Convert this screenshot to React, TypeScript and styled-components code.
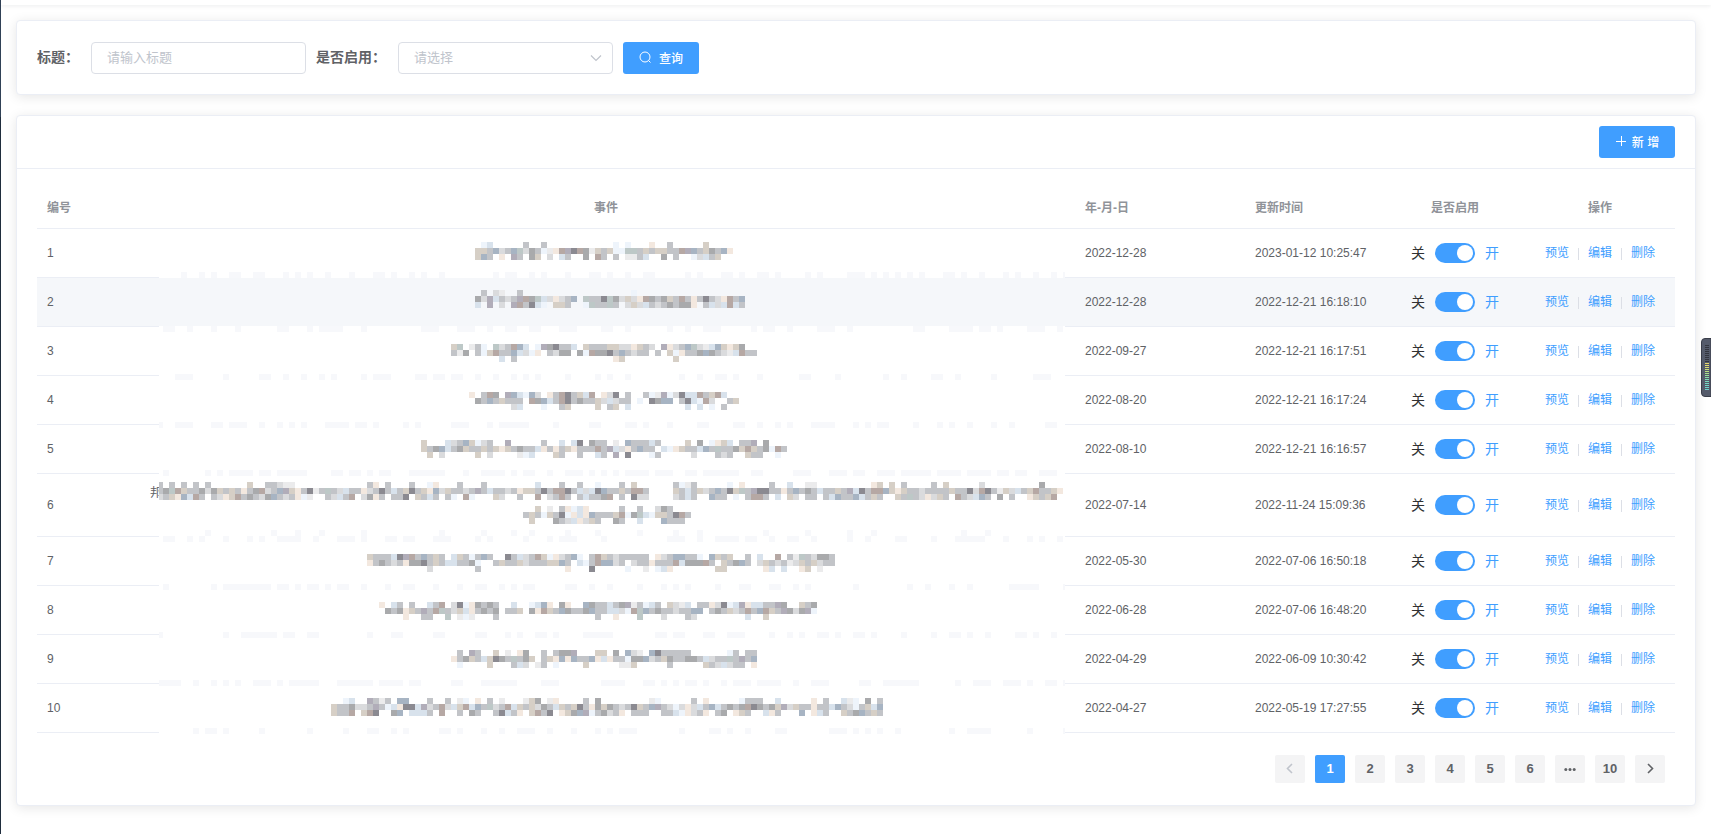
import React, { useState } from "react";
import styled, { createGlobalStyle, css } from "styled-components";

const blue = "#409eff";
const line = "#ebeef5";

const GlobalStyle = createGlobalStyle`
  * { box-sizing: border-box; }
  body {
    margin: 0;
    background: #fff;
    color: #303133;
    font-family: "Liberation Sans", "Noto Sans CJK SC", sans-serif;
    font-size: 14px;
  }
  button, input, select { font-family: inherit; }
`;

const Shell = styled.div`
  display: flex;
  min-height: 100vh;
`;

const SidebarEdge = styled.aside`
  flex: 0 0 1px;
  background: linear-gradient(#304156 0 117px, #1f2d3d 117px);
`;

const Content = styled.div`
  flex: 1;
  min-width: 0;
`;

const TopBar = styled.header`
  height: 5px;
  background: #fff;
  box-shadow: 0 1px 4px rgba(0, 21, 41, 0.08);
`;

const Main = styled.main`
  display: flex;
  flex-direction: column;
  gap: 20px;
  padding: 15px;
`;

const Card = styled.section`
  background: #fff;
  border: 1px solid ${line};
  border-radius: 4px;
  box-shadow: 0 2px 12px rgba(0, 0, 0, 0.1);
`;

const SearchForm = styled.form`
  display: flex;
  align-items: center;
  gap: 10px;
  padding: 21px 20px 20px;
`;

const Field = styled.div`
  display: flex;
  align-items: center;
`;

const FieldLabel = styled.label`
  padding: 0 12px 2px 0;
  color: #606266;
  font-weight: 700;
  line-height: 30px;
`;

const controlStyle = css`
  width: 215px;
  height: 32px;
  padding: 0 15px 2px;
  border: 1px solid #dcdfe6;
  border-radius: 4px;
  background: #fff;
  font-size: 13px;
  outline: none;
`;

const TextInput = styled.input`
  ${controlStyle}
  color: #606266;
  &::placeholder { color: #c0c4cc; }
`;

const SelectWrap = styled.div`
  position: relative;
  display: flex;
`;

const SelectBox = styled.select`
  ${controlStyle}
  appearance: none;
  color: #c0c4cc;
`;

const SelectArrow = styled.svg`
  position: absolute;
  right: 11px;
  top: 10px;
  pointer-events: none;
`;

const PrimaryButton = styled.button<{ $gap: number }>`
  display: flex;
  align-items: center;
  justify-content: center;
  gap: ${(p) => p.$gap}px;
  width: 76px;
  height: 32px;
  padding: 0 0 2px;
  border: 0;
  border-radius: 3px;
  background: ${blue};
  color: #fff;
  font-size: 12px;
  font-weight: 500;
  cursor: pointer;
`;

const CardHeader = styled.div`
  display: flex;
  justify-content: flex-end;
  padding: 10px 20px;
  border-bottom: 1px solid ${line};
`;

const CardBody = styled.div`
  padding: 20px;
`;

const TableWrap = styled.div`
  position: relative;
`;

const Table = styled.table`
  width: 100%;
  table-layout: fixed;
  border-collapse: separate;
  border-spacing: 0;
  color: #606266;
  font-size: 12px;
  line-height: 23px;
`;

const Col = styled.col<{ $width?: number }>`
  ${(p) => p.$width && `width: ${p.$width}px;`}
`;

const HeadCell = styled.th<{ $center?: boolean }>`
  padding: 8px 10px;
  border-bottom: 1px solid ${line};
  color: #909399;
  font-weight: 700;
  text-align: ${(p) => (p.$center ? "center" : "left")};
`;

const Row = styled.tr<{ $active: boolean; $tall: boolean }>`
  height: ${(p) => (p.$tall ? 63 : 49)}px;
  background: ${(p) => (p.$active ? "#f5f7fa" : "transparent")};
`;

const Cell = styled.td`
  padding: 8px 10px;
  border-bottom: 1px solid ${line};
`;

const LeadText = styled.div`
  min-height: 46px;
  padding-left: 3px;
`;

const Mosaic = styled.svg`
  position: absolute;
  left: 122px;
  top: 47px;
  pointer-events: none;
`;

const SwitchLabel = styled.label`
  display: flex;
  align-items: center;
  justify-content: center;
  gap: 10px;
  line-height: 20px;
`;

const SwitchText = styled.span<{ $on: boolean }>`
  color: ${(p) => (p.$on ? blue : "#303133")};
  font-size: 14px;
`;

const SwitchInput = styled.input`
  appearance: none;
  display: flex;
  align-items: center;
  width: 40px;
  height: 20px;
  margin: 0;
  padding: 0 2px;
  border-radius: 10px;
  background: #dcdfe6;
  cursor: pointer;
  &::before {
    content: "";
    width: 16px;
    height: 16px;
    border-radius: 50%;
    background: #fff;
  }
  &:checked {
    justify-content: flex-end;
    background: ${blue};
  }
`;

const Actions = styled.div`
  display: flex;
  align-items: center;
  justify-content: center;
`;

const ActionLink = styled.a`
  color: ${blue};
  text-decoration: none;
`;

const Divider = styled.span`
  width: 1px;
  height: 12px;
  margin: 2px 9px 0;
  background: #dcdfe6;
`;

const Pagination = styled.nav`
  display: flex;
  justify-content: flex-end;
  gap: 10px;
  padding: 22px 10px 2px;
`;

const PageButton = styled.button<{ $active?: boolean }>`
  display: flex;
  align-items: center;
  justify-content: center;
  width: 30px;
  height: 28px;
  padding: 0 0 2px;
  border: 0;
  border-radius: 2px;
  background: ${(p) => (p.$active ? blue : "#f4f4f5")};
  color: ${(p) => (p.$active ? "#fff" : "#606266")};
  font-size: 13px;
  font-weight: 700;
  cursor: pointer;
  &:disabled { color: #c0c4cc; }
`;

const Meter = styled.div`
  position: fixed;
  right: 0;
  top: 338px;
`;

const CELL = 6;

const palette: Record<string, string> = {
  a: "#a9aaac",
  b: "#c2c4c8",
  c: "#dadbdd",
  d: "#8b8a91",
  e: "#d6cfc6",
  f: "#b6a8a4",
  g: "#a7b4c3",
  h: "#d8e2ec",
  i: "#f3e8df",
  j: "#eef4fb",
  k: "#ebebec",
  l: "#b1adb9",
  m: "#bdc8c7",
};

/* Each block: first column, first row, width in cells, then one string for every line of cells. */
const blocks: { x: number; y: number; w: number; lines: string[] }[] = [
  {
    x: 52, y: 1, w: 43,
    lines: [
      ".jh.....b..b...........j.j...i..b.....e",
      "eebgcbgmcabjkifldfakebejjmmbebeebbflgbeabgi",
      "egb.i.lb.ae.c.hb..a.fb.b.kkbh..a.b..jchbe",
    ],
  },
  {
    x: 52, y: 9, w: 45,
    lines: [
      ".b.ck..b..................j",
      "aclhbcblfamhcicbg.mbbdmacecifabaebfbibdbcifbg",
      "h.l.c.lfbdhj.eeb..jmbbmb.cechbcbabaai.bhchfhb",
    ],
  },
  {
    x: 48, y: 18, w: 51,
    lines: [
      "em.kbj.mcbfgh.jladbbh.ebbbeecciebc.licbgmckhgeiea",
      "bka.bjefbbghcji.bcaa.ajfaadbgbcbb.b.ejibbagabckhfbbe",
      "........h.b................ie........e",
    ],
  },
  {
    x: 51, y: 26, w: 45,
    lines: [
      "i.bfa.lghjgc.ibfdbehf.icd.b..bjkljcdhhfbefh",
      ".abgbebbb.faghbfdbabbechcbb.j.dagg.bdhjfc..bef",
      ".......ch...j..be....e.be.h.........h.h.j.b",
    ],
  },
  {
    x: 43, y: 34, w: 61,
    lines: [
      "e...hcbgejcb..l.....b..h.hd.abb.k.gbbbhb....e.a.jieh.bbl.a",
      "ebaghbaebbebeiebabbhibibeibbbfblhcibgbb.hjiebbhgbmbbaefebajfbcb",
      ".e.c.....e.c....kjh...eb..b..hb.l.d...jb.....c...bcb..ebb..j..e",
    ],
  },
  {
    x: -1, y: 41, w: 151,
    lines: [
      "b.b.b.b.b......e..bbckk............bi.b...b..ji...b...b........h...b..b..j...b.e......bjkb.....j.i....b..h..kk.........ie.e.b....b.e.....c.........a",
      "bamfebbacaebebibafcbgleibdkbmbchbbicbdbhbedbeigcebbcblbhbbcbieebdbffdbhchdgbbebffb....ebhbecbgbdemblddbbibgbabhbbeblhdbffgeiebbcbbbbebbdcfdbkechbefbbeiebbh",
      "cbeighfb.bciefbabcagbcbijk..bchbf.caib.bbd.ebhb.bj.fj...ec..b..f.cbfb.bhbbaf.b.dcc....cbhb..gbb.j.bffb.h.ec.bb.bhgbbghbeb..ebmbciceb.fbchgb.a.b..iebef",
    ],
  },
  {
    x: 60, y: 45, w: 28,
    lines: [
      "..e.k.bijhi.....b..b..cab.",
      "bebjebdjihigbbbefjamhjeebdfbek",
      ".e...abchiceb..ab..h...gbbb",
    ],
  },
  {
    x: 34, y: 53, w: 78,
    lines: [
      "ebbbhdlfbgbeb.hebjbgb..dbhcbfejicbgj.bfebcbbbbb.icbggbbj.gebe..b.h..f.bkmbcaab",
      "ibabcbiaadbebhhbbaj..bebbecbbbeegb.hjbfggcb.cbbibbbfhaaafb.ebagb.cebcbkcebecbb",
      "..........c.......b..............i...d.....j..k.jhi.......ee......ih.h..ie.k",
    ],
  },
  {
    x: 36, y: 61, w: 73,
    lines: [
      "i.hb.b..hbf.cdjiabab..h..jhgi.ai..gabbhbalkbjhb.eckh.bbicdjhlihhbbla..ebai",
      ".abaieblbfmbcehibaba.bbe.aifebgabbagbbhhcjfmgbabbcbbgg.babecbfbgfeblacalj",
      "....i..bb..m.kjk...b................b..i...m...c...bc........h..e.........h",
    ],
  },
  {
    x: 48, y: 69, w: 51,
    lines: [
      ".b.lb..e.k.ia..b.baal...ee.a.gck.gdbbbbb......jb.bb",
      "ibaebhedabmbae.beigigbbgihibbjaagcbeabbaabhcbbmblbgdgj",
      ".j....e...bhc.kb.j....e.....kke.....b.....ebchcbb.ik",
    ],
  },
  {
    x: 28, y: 77, w: 92,
    lines: [
      "..jh..lbkb.gg...b..b.kj.i.b.k...kea.ki....b.a........kj.....b.i.....jbbb..h.....i.b..hkj.a.bgfi",
      "ebbaccblbjhiddhlcbfchefhgbmcbfhebecabhebedbiaeabcbdebglbcjcichbghbabafdabaelcebbibbhgbcjbehgbdbmcbcechebg",
      "ebbf.efd..ag.hhhb.f..b.ab..bdhbi.efbd.ieagljbacbi.bbb..bbhjicbi.ba.ieb..hib...g.ihb..ebagbebfaebb",
    ],
  },
];

/* Faint rows of cells that cover the separators: row index and fill rate. */
const seams: [number, number][] = [
  [6, 35], [15, 35], [23, 35], [31, 40], [39, 62],
  [49, 10], [50, 32], [58, 35], [66, 42], [74, 50], [82, 38],
];

const speckle = (x: number, y: number) => {
  let h = (x * 374761393 + y * 668265263) | 0;
  h = Math.imul(h ^ (h >>> 13), 1274126177);
  return ((h ^ (h >>> 16)) >>> 0) % 100;
};

function EventMosaic() {
  return (
    <Mosaic width="906" height="498" shapeRendering="crispEdges" aria-hidden="true">
      <rect x="0" y={41 * CELL} width="4" height="18" fill="#fff" />
      {seams.map(([y, rate]) => (
        <g key={y}>
          <rect x="0" y={y * CELL} width="906" height={CELL} fill="#fff" />
          {Array.from({ length: 152 }, (_, i) =>
            speckle(i, y) < rate ? (
              <rect key={i} x={4 + (i - 1) * CELL} y={y * CELL} width={CELL} height={CELL} fill="#f7f8fb" />
            ) : null
          )}
        </g>
      ))}
      {blocks.map((b, n) =>
        b.lines.map((text, r) =>
          [...text.slice(0, b.w)].map((c, i) =>
            palette[c] ? (
              <rect
                key={`${n}-${r}-${i}`}
                x={4 + (b.x + i) * CELL}
                y={(b.y + r) * CELL}
                width={CELL}
                height={CELL}
                fill={palette[c]}
              />
            ) : null
          )
        )
      )}
    </Mosaic>
  );
}

const records = [
  { id: 1, date: "2022-12-28", updated: "2023-01-12 10:25:47" },
  { id: 2, date: "2022-12-28", updated: "2022-12-21 16:18:10" },
  { id: 3, date: "2022-09-27", updated: "2022-12-21 16:17:51" },
  { id: 4, date: "2022-08-20", updated: "2022-12-21 16:17:24" },
  { id: 5, date: "2022-08-10", updated: "2022-12-21 16:16:57" },
  { id: 6, date: "2022-07-14", updated: "2022-11-24 15:09:36", lead: "邦" },
  { id: 7, date: "2022-05-30", updated: "2022-07-06 16:50:18" },
  { id: 8, date: "2022-06-28", updated: "2022-07-06 16:48:20" },
  { id: 9, date: "2022-04-29", updated: "2022-06-09 10:30:42" },
  { id: 10, date: "2022-04-27", updated: "2022-05-19 17:27:55" },
];

function EnableSwitch({ id }: { id: number }) {
  const [on, setOn] = useState(true);
  return (
    <SwitchLabel htmlFor={`enabled-${id}`}>
      <SwitchText $on={!on}>关</SwitchText>
      <SwitchInput
        id={`enabled-${id}`}
        type="checkbox"
        role="switch"
        checked={on}
        onChange={(e) => setOn(e.target.checked)}
      />
      <SwitchText $on={on}>开</SwitchText>
    </SwitchLabel>
  );
}

function Chevron({ flip }: { flip?: boolean }) {
  return (
    <svg width="12" height="12" viewBox="0 0 12 12" fill="none" stroke="currentColor" strokeWidth="1.6">
      <path d={flip ? "M4 2l4.5 4.5L4 11" : "M8 2L3.500 6.500l4.500 4.500"} />
    </svg>
  );
}

const meterColors = [
  "#33363f", "#33363f", "#33363f", "#33363f", "#33363f", "#33363f", "#33363f", "#33363f", "#33363f",
  "#e8d86a", "#e4da6c", "#d8dc70", "#c8de78", "#b8e080", "#a8e08c", "#98e098", "#88dea8",
  "#80dcb4", "#78dabc", "#74d8c4", "#70d6c8", "#6cd4cc", "#6cd4cc",
];

export default function App() {
  const [title, setTitle] = useState("");
  const [enabled, setEnabled] = useState("");
  const [page, setPage] = useState("1");

  return (
    <Shell>
      <GlobalStyle />
      <SidebarEdge />
      <Content>
        <TopBar />
        <Main>
          <Card>
            <SearchForm onSubmit={(e) => e.preventDefault()}>
              <Field>
                <FieldLabel htmlFor="title">标题：</FieldLabel>
                <TextInput
                  id="title"
                  placeholder="请输入标题"
                  value={title}
                  onChange={(e) => setTitle(e.target.value)}
                />
              </Field>
              <Field>
                <FieldLabel htmlFor="enabled">是否启用：</FieldLabel>
                <SelectWrap>
                  <SelectBox id="enabled" value={enabled} onChange={(e) => setEnabled(e.target.value)}>
                    <option value="">请选择</option>
                    <option value="1">开</option>
                    <option value="0">关</option>
                  </SelectBox>
                  <SelectArrow width="12" height="12" viewBox="0 0 12 12" fill="none" stroke="#c0c4cc" strokeWidth="1.2">
                    <path d="M1 3.5l5 5 5-5" />
                  </SelectArrow>
                </SelectWrap>
              </Field>
              <PrimaryButton type="submit" $gap={8}>
                <svg width="12" height="12" viewBox="0 0 12 12" fill="none" stroke="#fff" strokeWidth="1">
                  <circle cx="6" cy="6" r="5" />
                  <path d="M9.500 9.500l2 2" />
                </svg>
                查询
              </PrimaryButton>
            </SearchForm>
          </Card>

          <Card>
            <CardHeader>
              <PrimaryButton type="button" $gap={5}>
                <svg width="12" height="12" viewBox="0 0 12 12" fill="none" stroke="#fff" strokeWidth="1">
                  <path d="M1 6.5h10M6.5 1v10" />
                </svg>
                新 增
              </PrimaryButton>
            </CardHeader>
            <CardBody>
              <TableWrap>
                <Table>
                  <colgroup>
                    <Col $width={100} />
                    <Col />
                    <Col $width={170} />
                    <Col $width={140} />
                    <Col $width={140} />
                    <Col $width={150} />
                  </colgroup>
                  <thead>
                    <tr>
                      <HeadCell>编号</HeadCell>
                      <HeadCell $center>事件</HeadCell>
                      <HeadCell>年-月-日</HeadCell>
                      <HeadCell>更新时间</HeadCell>
                      <HeadCell $center>是否启用</HeadCell>
                      <HeadCell $center>操作</HeadCell>
                    </tr>
                  </thead>
                  <tbody>
                    {records.map((r) => (
                      <Row key={r.id} $active={r.id === 2} $tall={!!r.lead}>
                        <Cell>{r.id}</Cell>
                        <Cell>{r.lead && <LeadText>{r.lead}</LeadText>}</Cell>
                        <Cell>{r.date}</Cell>
                        <Cell>{r.updated}</Cell>
                        <Cell>
                          <EnableSwitch id={r.id} />
                        </Cell>
                        <Cell>
                          <Actions>
                            <ActionLink href="#preview">预览</ActionLink>
                            <Divider />
                            <ActionLink href="#edit">编辑</ActionLink>
                            <Divider />
                            <ActionLink href="#delete">删除</ActionLink>
                          </Actions>
                        </Cell>
                      </Row>
                    ))}
                  </tbody>
                </Table>
                <EventMosaic />
              </TableWrap>
              <Pagination aria-label="分页">
                <PageButton type="button" disabled aria-label="上一页">
                  <Chevron />
                </PageButton>
                {["1", "2", "3", "4", "5", "6"].map((p) => (
                  <PageButton key={p} type="button" $active={p === page} onClick={() => setPage(p)}>
                    {p}
                  </PageButton>
                ))}
                <PageButton type="button" aria-label="更多">
                  <svg width="12" height="12" viewBox="0 0 12 12" fill="currentColor">
                    <circle cx="1.8" cy="7.5" r="1.5" />
                    <circle cx="6" cy="7.5" r="1.5" />
                    <circle cx="10.2" cy="7.5" r="1.5" />
                  </svg>
                </PageButton>
                <PageButton type="button" $active={page === "10"} onClick={() => setPage("10")}>
                  10
                </PageButton>
                <PageButton type="button" aria-label="下一页">
                  <Chevron flip />
                </PageButton>
              </Pagination>
            </CardBody>
          </Card>
        </Main>
      </Content>
      <Meter>
        <svg width="10" height="59" viewBox="0 0 10 59" display="block" aria-hidden="true">
          <path d="M10 .5H4Q.5 .5 .5 4V55Q.5 58.5 4 58.5H10Z" fill="#555b6b" stroke="#3a3e4a" />
          {meterColors.map((c, i) => (
            <rect key={i} x="4" y={7 + i * 2} width="4" height="1" fill={c} shapeRendering="crispEdges" />
          ))}
        </svg>
      </Meter>
    </Shell>
  );
}
